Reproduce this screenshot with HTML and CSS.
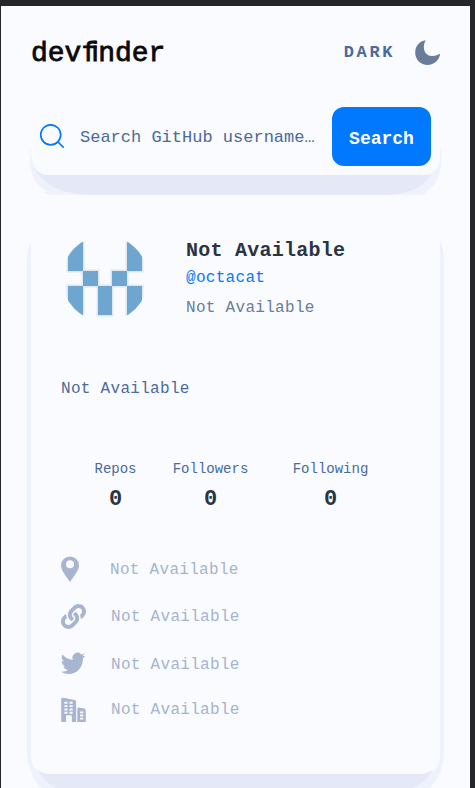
FILE: index.html
```html
<!DOCTYPE html>
<html lang="en">
<head>
<meta charset="utf-8">
<meta name="viewport" content="width=device-width, initial-scale=1">
<title>devfinder</title>
<link rel="stylesheet" href="styles.css">
</head>
<body>
<main class="page">
  <header class="header">
    <h1 class="logo">dev<span class="logo-f">f</span><span class="logo-i">i</span>nder</h1>
    <button class="theme" type="button"><span>DARK</span>
      <svg width="26" height="26" viewBox="0 0 26 26"><path fill="#697c9a" d="M10.700 1.200C7 7.500 8.500 17 17.500 17C20.500 17 23 16 25.200 14.500C24.500 21 19 26 12.700 26C5.800 26 .2 20.500 .2 13.700C.2 7 4.500 2 10.700 1.200Z"/></svg>
    </button>
  </header>
  <form class="search">
    <svg class="search-shade" width="416" height="60" viewBox="27 140 416 60">
      <path fill="#edf2fc" d="M30 149V163C31 177 37 187 47 191L45 192Q48 194.700 54 194.700H420Q426 194.700 427 191C436 186 442 173 441.700 155L440 147V155Q440 175 423 175H46Q31 172 31 149Z"/>
      <path fill="#e5e9f7" d="M34 168Q39 175 46 175H431Q418 194.700 385 194.700H86Q48 193 34 168Z"/>
    </svg>
    <svg class="search-icon" width="26" height="26" viewBox="0 0 26 26" fill="none" stroke="#0079ff" stroke-width="1.700"><circle cx="10.700" cy="10.800" r="10"/><path d="m17.500 17.500 6.200 6.200"/></svg>
    <span class="placeholder">Search GitHub username…</span>
    <button class="submit" type="button">Search</button>
  </form>
  <section class="card">
    <svg class="card-shade" width="420" height="555" viewBox="25 233 420 555">
      <path fill="#edf2fc" d="M31 241Q27 249 27 263V755C28 769 34 781 42 788H430C438 780 443 768 444 754V263Q444 249 440 239V755Q440 774 422 774H49Q31 774 31 755Z"/>
      <path fill="#e5e9f7" d="M37 769Q42 774 49 774H424L433 770Q426 782 413 788H56Q44 782 37 769Z"/>
    </svg>
    <div class="profile">
      <svg class="avatar" width="84" height="84" viewBox="0 0 84 84">
        <defs><clipPath id="round"><circle cx="42" cy="41.500" r="43"/></clipPath></defs>
        <path clip-path="url(#round)" fill="#6fa6cf" stroke="#dfe6f0" stroke-width="3" paint-order="stroke" d="M5 4H20V34H5ZM64 4H79V34H64ZM20 34H35V49H20ZM49 34H64V49H49ZM5 49H20V79H5ZM35 49H49V78H35ZM64 49H79V79H64Z"/>
      </svg>
      <div class="identity">
        <h2 class="name">Not Available</h2>
        <p class="user">@octacat</p>
        <p class="joined">Not Available</p>
      </div>
    </div>
    <p class="bio">Not Available</p>
    <dl class="stats">
      <div><dt>Repos</dt><dd>0</dd></div>
      <div><dt>Followers</dt><dd>0</dd></div>
      <div><dt>Following</dt><dd>0</dd></div>
    </dl>
    <ul class="links">
      <li class="place"><svg width="26" height="26" viewBox="0 0 26 26"><path fill-rule="evenodd" d="M9 .5A9 9 0 0 0 0 9.300C0 14.500 5 20 9 26 13 20 18 14.500 18 9.300A9 9 0 0 0 9 .5ZM9 4.300a4 4 0 1 1 0 8 4 4 0 0 1 0-8Z"/></svg><span>Not Available</span></li>
      <li><svg width="25" height="25" viewBox="0 0 512 512"><path d="M326.612 185.391c59.747 59.809 58.927 155.698.36 214.590-.11.120-.24.250-.36.370l-67.200 67.200c-59.270 59.270-155.699 59.262-214.960 0-59.270-59.260-59.270-155.700 0-214.960l37.106-37.106c9.840-9.840 26.786-3.300 27.294 10.606.648 17.722 3.826 35.527 9.690 52.721 1.986 5.822.567 12.262-3.783 16.612l-13.087 13.087c-28.026 28.026-28.905 73.660-1.155 101.960 28.024 28.579 74.086 28.749 102.325.510l67.200-67.190c28.191-28.191 28.073-73.757 0-101.830-3.701-3.694-7.429-6.564-10.341-8.569a16.037 16.037 0 0 1-6.947-12.606c-.396-10.567 3.348-21.456 11.698-29.806l21.054-21.055c5.521-5.521 14.182-6.199 20.584-1.731a152.482 152.482 0 0 1 20.522 17.197ZM467.547 44.449c-59.261-59.262-155.690-59.270-214.960 0l-67.200 67.200c-.120.120-.250.250-.360.370-58.566 58.892-59.387 154.781.360 214.590a152.454 152.454 0 0 0 20.521 17.196c6.402 4.468 15.064 3.789 20.584-1.731l21.054-21.055c8.350-8.350 12.094-19.239 11.698-29.806a16.037 16.037 0 0 0-6.947-12.606c-2.912-2.005-6.640-4.875-10.341-8.569-28.073-28.073-28.191-73.639 0-101.830l67.200-67.190c28.239-28.239 74.300-28.069 102.325.510 27.750 28.300 26.872 73.934-1.155 101.960l-13.087 13.087c-4.350 4.350-5.769 10.790-3.783 16.612 5.864 17.194 9.042 34.999 9.690 52.721.509 13.906 17.454 20.446 27.294 10.606l37.106-37.106c59.271-59.259 59.271-155.699.001-214.959Z"/></svg><span>Not Available</span></li>
      <li><svg width="25" height="25" viewBox="0 0 25 25"><path d="M24.400 3.700a10 10 0 0 1-2.500 2.300C22.200 14.500 16.500 22 7.700 22A14 14 0 0 1 0 19.700a10 10 0 0 0 7.200-2 5 5 0 0 1-4.700-3.500H4.700A5 5 0 0 1 .8 9.100L3.100 9.600A5 5 0 0 1 1.600 2.500 14 14 0 0 0 11.900 7.700a5 5 0 0 1 8.500-5.100l3.200-1.200-2.100 2.800 2.900-.5Z"/></svg><span>Not Available</span></li>
      <li><svg width="25" height="25" viewBox="0 0 25.500 26"><path d="M0 2Q0 .5 2 .7L14 3 15.500 4.500V26H11V20Q11 19 10 19H6Q5 19 5 20V26H0ZM16.700 11.500Q17 10.900 18 11L24 12Q25.500 12.500 25.500 14V26H16.700Z"/><path class="windows" d="M3.300 6h3.200M8.600 6h3.200M3.300 9.500h3.200M8.600 9.500h3.200M3.300 13h3.200M8.600 13h3.200M3.300 16.400h3.200M8.600 16.400h3.200M19.500 16h3.500M19.500 19.200h3.500M19.500 22.400h3.500"/></svg><span>Not Available</span></li>
    </ul>
  </section>
</main>
</body>
</html>
```

FILE: styles.css
```css
* { box-sizing: border-box; margin: 0; padding: 0; }
html { background: #24262b; overflow: hidden; }
body { height: 788px; overflow: hidden; padding: 6px 5px 0 1px; background: #24262b; font-family: "Liberation Mono", monospace; color: #4b6a9b; }
svg { display: block; flex: none; }
button { border: 0; background: none; font: inherit; color: inherit; }
.page { height: 782px; background: #fafbff; padding: 33px 29px 0; }
.header { display: flex; justify-content: space-between; align-items: center; height: 26px; margin-left: 1px; }
.logo { font-size: 28px; line-height: 26px; padding-top: 2px; font-weight: 400; color: #0a0a0a; -webkit-text-stroke: .8px #0a0a0a; }
.logo-f { letter-spacing: -6.300px; }
.logo-i { font-family: "Liberation Sans", sans-serif; }
.theme { display: flex; align-items: center; gap: 20px; font-size: 17px; font-weight: 700; letter-spacing: 2.600px; }
.search { position: relative; display: flex; align-items: center; height: 110px; margin-top: 25px; padding: 0 10px 18px; }
.search-shade { position: absolute; left: -3px; top: 50px; }
.search-icon { position: relative; margin-top: 2px; }
.placeholder { position: relative; flex: 1; margin: 2px 0 0 14px; font-size: 17px; white-space: nowrap; }
.submit { position: relative; width: 99px; height: 59px; margin-top: 1px; border-radius: 12px; background: #0079ff; color: #fff; font-size: 18px; font-weight: 700; padding-top: 4px; }
.card { position: relative; padding: 37px 31px 0; }
.card-shade { position: absolute; left: -5px; top: 33px; }
.profile { position: relative; display: flex; gap: 42px; height: 84px; }
.avatar { overflow: visible; margin-left: 1.500px; }
.identity { margin-left: -2.500px; }
.name { font-size: 20px; line-height: 28px; color: #2b3442; letter-spacing: .25px; }
.user { font-size: 16px; line-height: 24px; margin-top: 1px; color: #0079ff; letter-spacing: .3px; }
.joined { font-size: 16px; line-height: 24px; margin-top: 6px; color: #697c9a; letter-spacing: .3px; }
.bio { position: relative; font-size: 16px; line-height: 24px; letter-spacing: .3px; margin-top: 56px; }
.stats { position: relative; display: grid; grid-template-columns: 75px 115px 125px; margin: 58px 0 0 17px; text-align: center; }
.stats dt { font-size: 14px; line-height: 20px; }
.stats dd { font-size: 22px; line-height: 36px; padding-top: 3px; font-weight: 700; color: #2b3442; }
.links { position: relative; list-style: none; margin-top: 38px; color: #a4b4cc; display: grid; grid-template-rows: 47px 48px 45px 28px; }
.links li { display: flex; gap: 25px; height: 26px; align-items: center; font-size: 16px; letter-spacing: .3px; }
.links .place { gap: 23px; }
.links li span { padding-top: 1px; }
.links svg { fill: #a7b5d0; }
.links .windows { stroke: #fafbff; stroke-width: 1.900; fill: none; }
```
